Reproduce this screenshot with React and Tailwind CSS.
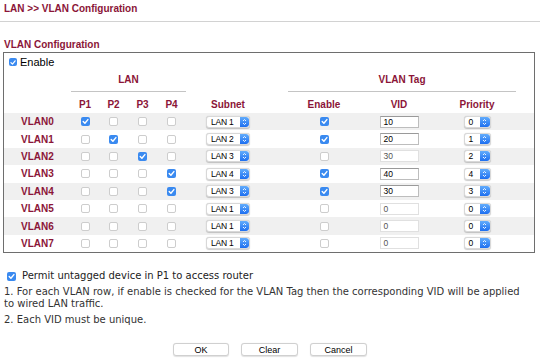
import React from 'react';

const maroon = 'text-[#8b1538]';

const rows = [
  { p: [1, 0, 0, 0], lan: 1, en: 1, vid: '10', pri: 0 },
  { p: [0, 1, 0, 0], lan: 2, en: 1, vid: '20', pri: 1 },
  { p: [0, 0, 1, 0], lan: 3, en: 0, vid: '30', pri: 2 },
  { p: [0, 0, 0, 1], lan: 4, en: 1, vid: '40', pri: 4 },
  { p: [0, 0, 0, 1], lan: 3, en: 1, vid: '30', pri: 3 },
  { p: [0, 0, 0, 0], lan: 1, en: 0, vid: '0', pri: 0 },
  { p: [0, 0, 0, 0], lan: 1, en: 0, vid: '0', pri: 0 },
  { p: [0, 0, 0, 0], lan: 1, en: 0, vid: '0', pri: 0 },
];

const cols = 'grid grid-cols-[67px_28px_29px_29px_29px_84px_108px_42px_1fr]';

const Check = ({ on, size = 'w-[9px] h-[9px]' }) =>
  on ? (
    <span className={`${size} rounded-[2px] bg-[#3a8af0] flex items-center justify-center shrink-0`}>
      <svg width="9" height="9" viewBox="0 0 9 9">
        <path d="M2.2 4.6 L3.9 6.3 L6.9 2.6" fill="none" stroke="white" strokeWidth="1.4" strokeLinecap="round" strokeLinejoin="round" />
      </svg>
    </span>
  ) : (
    <span className={`${size} rounded-[2px] border border-[#cdcdcd] bg-white shrink-0`} />
  );

const Stepper = ({ w }) => (
  <span className={`${w} h-full bg-gradient-to-b from-[#62acfc] to-[#1c6ef0] rounded-r-[3px] flex items-center justify-center shrink-0`}>
    <svg width="5" height="8" viewBox="0 0 5 8">
      <path d="M1 3 L2.5 1.5 L4 3 M1 5 L2.5 6.5 L4 5" fill="none" stroke="white" strokeWidth="0.9" />
    </svg>
  </span>
);

const Select = ({ label, w, sw }) => (
  <div className={`${w} h-[12px] rounded-[3px] border border-[#d8d8d8] bg-white flex items-center shadow-[0_0.5px_1px_rgba(0,0,0,0.2)] overflow-hidden`}>
    <span className="flex-1 text-[8.5px] leading-[10px] tracking-[-0.2px] pl-[4px] text-black whitespace-nowrap">{label}</span>
    <Stepper w={sw} />
  </div>
);

export default function App() {
  return (
    <div className="w-[540px] h-[359px] bg-white overflow-hidden font-['Liberation_Sans',Arial,sans-serif]">
      <div className={`px-1 pt-[3px] h-[21px] text-[10px] leading-[12px] font-bold ${maroon}`}>LAN &gt;&gt; VLAN Configuration</div>
      <div className="h-px bg-[#d2d2d2]" />
      <div className={`mt-[17px] px-1 text-[10px] leading-[12px] font-bold ${maroon}`}>VLAN Configuration</div>
      <div className="mt-[1px] mx-[3px] w-[532px] border border-[#6e6e6e]">
        <div className="h-[18px] flex items-center pl-[5px] gap-[3px]">
          <Check on size="w-[8px] h-[8px]" />
          <span className="text-[11px] leading-[12px] text-black">Enable</span>
        </div>
        <div className={`${cols} h-[21px] text-[10px] font-bold leading-[12px] ${maroon}`}>
          <div />
          <div className="col-span-4 border-b border-[#c4c4c4] text-center pt-[3px]">LAN</div>
          <div />
          <div className="col-span-3 mx-[18px] border-b border-[#c4c4c4] text-center pt-[3px]">VLAN Tag</div>
        </div>
        <div className={`${cols} h-[21px] text-[10px] font-bold leading-[13px] ${maroon} text-center pt-[6px]`}>
          <div />
          <div>P1</div>
          <div>P2</div>
          <div>P3</div>
          <div>P4</div>
          <div>Subnet</div>
          <div>Enable</div>
          <div>VID</div>
          <div>Priority</div>
        </div>
        {rows.map((r, i) => (
          <div key={i} className={`${cols} h-[17.4px] items-center ${i % 2 === 0 ? 'bg-[#f0f0f0]' : 'bg-white'}`}>
            <div className={`text-center text-[10px] font-bold ${maroon}`}>VLAN{i}</div>
            {r.p.map((v, j) => (
              <div key={j} className="flex justify-center">
                <Check on={v} />
              </div>
            ))}
            <div className="flex justify-center">
              <Select label={`LAN ${r.lan}`} w="w-[44px]" sw="w-[9px]" />
            </div>
            <div className="flex justify-center">
              <Check on={r.en} />
            </div>
            <div className="flex justify-center">
              <div
                className={`w-[39px] h-[12px] border bg-white text-[8.5px] leading-[10px] pl-[3px] ${
                  r.en ? 'border-[#bdbdbd] border-t-[#9a9a9a] text-black' : 'border-[#e0e0e0] text-[#555]'
                }`}
              >
                {r.vid}
              </div>
            </div>
            <div className="flex justify-center">
              <Select label={r.pri} w="w-[27px]" sw="w-[10px]" />
            </div>
          </div>
        ))}
      </div>
      <div className="font-['DejaVu_Sans',Verdana,sans-serif] text-[10px] leading-[12px]">
        <div className="mt-[17px] h-[12px] flex items-center pl-[7px] gap-[6px] text-[#222]">
          <Check on />
          <span>Permit untagged device in P1 to access router</span>
        </div>
        <div className="mt-[4px] px-1 text-[#333]">
          1. For each VLAN row, if enable is checked for the VLAN Tag then the corresponding VID will be applied
          <br />
          to wired LAN traffic.
        </div>
        <div className="mt-[4px] px-1 text-[#333]">2. Each VID must be unique.</div>
      </div>
      <div className="mt-[17px] flex justify-center gap-[12px] text-[9px] leading-[10px]">
        <button className="w-[56px] h-[13px] rounded-[3px] border border-[#d0d0d0] bg-white shadow-[0_0.5px_1px_rgba(0,0,0,0.12)] text-black">OK</button>
        <button className="w-[57px] h-[13px] rounded-[3px] border border-[#d0d0d0] bg-white shadow-[0_0.5px_1px_rgba(0,0,0,0.12)] text-black">Clear</button>
        <button className="w-[57px] h-[13px] rounded-[3px] border border-[#d0d0d0] bg-white shadow-[0_0.5px_1px_rgba(0,0,0,0.12)] text-black">Cancel</button>
      </div>
    </div>
  );
}
